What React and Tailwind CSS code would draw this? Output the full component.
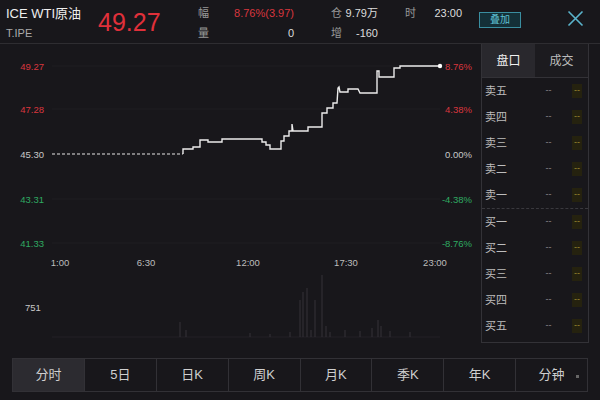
import React from 'react';

const font = { fontFamily: '"Liberation Sans", "Noto Sans CJK SC", sans-serif' };

const sells = ['卖五', '卖四', '卖三', '卖二', '卖一'];
const buys = ['买一', '买二', '买三', '买四', '买五'];
const tabs = ['分时', '5日', '日K', '周K', '月K', '季K', '年K', '分钟'];

// price line, page coords (chart svg starts at y=44)
const line = [
  [183, 154], [183, 149], [193, 149], [193, 147], [200, 147], [200, 140], [208, 140], [208, 142],
  [222, 142], [222, 139], [262, 139], [262, 142], [266, 142], [266, 145], [270, 145], [270, 149],
  [281, 149], [281, 141], [284, 141], [284, 136], [289, 136], [289, 131], [292, 131], [292, 124],
  [293, 131], [308, 131], [308, 127], [322, 127], [322, 113], [327, 113], [327, 108], [333, 108],
  [333, 103], [337, 103], [338, 88], [339, 87], [340, 92], [348, 92], [348, 89], [358, 89],
  [360, 93], [377, 93], [377, 71], [379, 71], [379, 77], [394, 77], [394, 68], [400, 68],
  [400, 66], [440, 66],
];

const bars = [
  [180, 322], [186, 330], [300, 300], [303, 292], [307, 288], [311, 330], [315, 300], [322, 275],
  [326, 326], [330, 332], [345, 330], [360, 331], [372, 328], [378, 320], [381, 326], [390, 331],
  [410, 332], [250, 333], [270, 334], [290, 332],
];

const Row = ({ label }) => (
  <div className="h-[26px] flex items-center pl-[3px] pr-[6px] text-[11px]">
    <span className="w-[40px] text-[#bdbdbd]">{label}</span>
    <span className="flex-1 text-center text-[#8a8a8a] text-[9px]">--</span>
    <span className="w-[10px] text-center text-[9px] text-[#9a8a30] bg-[#25220f]">--</span>
  </div>
);

export default function App() {
  const levels = [
    { y: 22, l: '49.27', r: '8.76%', c: '#d8363e' },
    { y: 65, l: '47.28', r: '4.38%', c: '#d8363e' },
    { y: 110, l: '45.30', r: '0.00%', c: '#c8c8c8' },
    { y: 155, l: '43.31', r: '-4.38%', c: '#2faa62' },
    { y: 199, l: '41.33', r: '-8.76%', c: '#2faa62' },
  ];
  const times = [['1:00', 60], ['6:30', 146], ['12:00', 248], ['17:30', 346], ['23:00', 435]];

  return (
    <div className="w-[600px] h-[400px] bg-[#18171b] text-white overflow-hidden" style={font}>
      {/* header */}
      <div className="h-[44px] border-b border-[#2e2d31] flex items-start">
        <div className="w-[98px] pl-[6px] pt-[5px] flex flex-col">
          <span className="text-[13px] leading-[17px] text-[#eeeeee]">ICE WTI原油</span>
          <span className="text-[11px] leading-[14px] mt-[4px] text-[#aaaaaa]">T.IPE</span>
        </div>
        <div className="w-[100px] pt-[8px] text-[25px] leading-[28px] text-[#e0303a]">49.27</div>
        <div className="w-[96px] pt-[3px] text-[11px] leading-[20px]">
          <div className="flex justify-between"><span className="text-[#999]">幅</span><span className="text-[#d8363e]">8.76%(3.97)</span></div>
          <div className="flex justify-between"><span className="text-[#999]">量</span><span className="text-[#ddd]">0</span></div>
        </div>
        <div className="w-[47px] ml-[37px] pt-[3px] text-[11px] leading-[20px]">
          <div className="flex justify-between"><span className="text-[#999]">仓</span><span className="text-[#ddd]">9.79万</span></div>
          <div className="flex justify-between"><span className="text-[#999]">增</span><span className="text-[#ddd]">-160</span></div>
        </div>
        <div className="w-[57px] ml-[27px] pt-[3px] text-[11px] leading-[20px] flex justify-between">
          <span className="text-[#999]">时</span><span className="text-[#ddd]">23:00</span>
        </div>
        <div className="ml-[17px] mt-[12px] w-[42px] h-[16px] border border-[#3a8ea0] bg-[#143038] text-[#5fc0d4] text-[10px] leading-[14px] text-center">叠加</div>
        <div className="ml-[46px] mt-[10px]">
          <svg width="17" height="17" viewBox="0 0 17 17">
            <path d="M1.5 1.5 L15.5 15.5 M15.5 1.5 L1.5 15.5" stroke="#5ab4cc" strokeWidth="1.6" />
          </svg>
        </div>
      </div>

      {/* main */}
      <div className="h-[306px] flex">
        <div className="w-[481px] h-full">
          <svg width="481" height="306" viewBox="0 0 481 306" style={font}>
            {levels.filter((v) => v.y !== 110).map((v) => (
              <line key={v.y} x1="52" x2="440" y1={v.y} y2={v.y} stroke="#1f1e23" strokeWidth="1" />
            ))}
            <line x1="52" x2="440" y1="293" y2="293" stroke="#222126" strokeWidth="1" />
            {levels.map((v) => (
              <g key={v.l} fontSize="9.5" fill={v.c}>
                <text x="44" y={v.y + 3.5} textAnchor="end">{v.l}</text>
                <text x="472" y={v.y + 3.5} textAnchor="end">{v.r}</text>
              </g>
            ))}
            {times.map(([t, x]) => (
              <text key={t} x={x} y="221.5" fontSize="9.5" fill="#bdbdbd" textAnchor="middle">{t}</text>
            ))}
            <text x="25" y="266.5" fontSize="9.5" fill="#c8c8c8">751</text>
            <g transform="translate(0,-44)">
              {bars.map(([x, y], i) => (
                <line key={i} x1={x} x2={x} y1={y} y2="337" stroke="#343338" strokeWidth="1" />
              ))}
              <line x1="52" x2="183" y1="154" y2="154" stroke="#e6e6e6" strokeWidth="1.2" strokeDasharray="3 2" />
              <polyline points={line.map((p) => p.join(',')).join(' ')} fill="none" stroke="#ececec" strokeWidth="1.4" />
              <circle cx="440" cy="66" r="2.2" fill="#ffffff" />
            </g>
          </svg>
        </div>

        {/* order book */}
        <div className="w-[108px] h-[299px] border-l border-r border-b border-[#333237] flex flex-col">
          <div className="h-[34px] flex border-b border-[#333237] text-[12px]">
            <div className="w-[53px] bg-[#29282d] flex items-center justify-center text-[#f0f0f0]">盘口</div>
            <div className="flex-1 bg-[#1c1b1f] flex items-center justify-center text-[#bbbbbb]">成交</div>
          </div>
          {sells.map((s) => <Row key={s} label={s} />)}
          <div className="border-t border-dashed border-[#3a393e]" />
          {buys.map((s) => <Row key={s} label={s} />)}
        </div>
      </div>

      {/* bottom tabs */}
      <div className="mt-[8px] mx-[12px] h-[34px] flex border border-[#323136]">
        {tabs.map((t, i) => (
          <div
            key={t}
            className={`relative flex-1 flex items-center justify-center text-[13px] text-[#cfcfcf] ${i > 0 ? 'border-l border-[#323136]' : ''} ${i === 0 ? 'bg-[#2c2b30]' : ''}`}
          >
            {t}
            {i === 7 && <span className="absolute right-[8px] top-[16px] w-[3px] h-[3px] bg-[#666]" />}
          </div>
        ))}
      </div>
    </div>
  );
}
